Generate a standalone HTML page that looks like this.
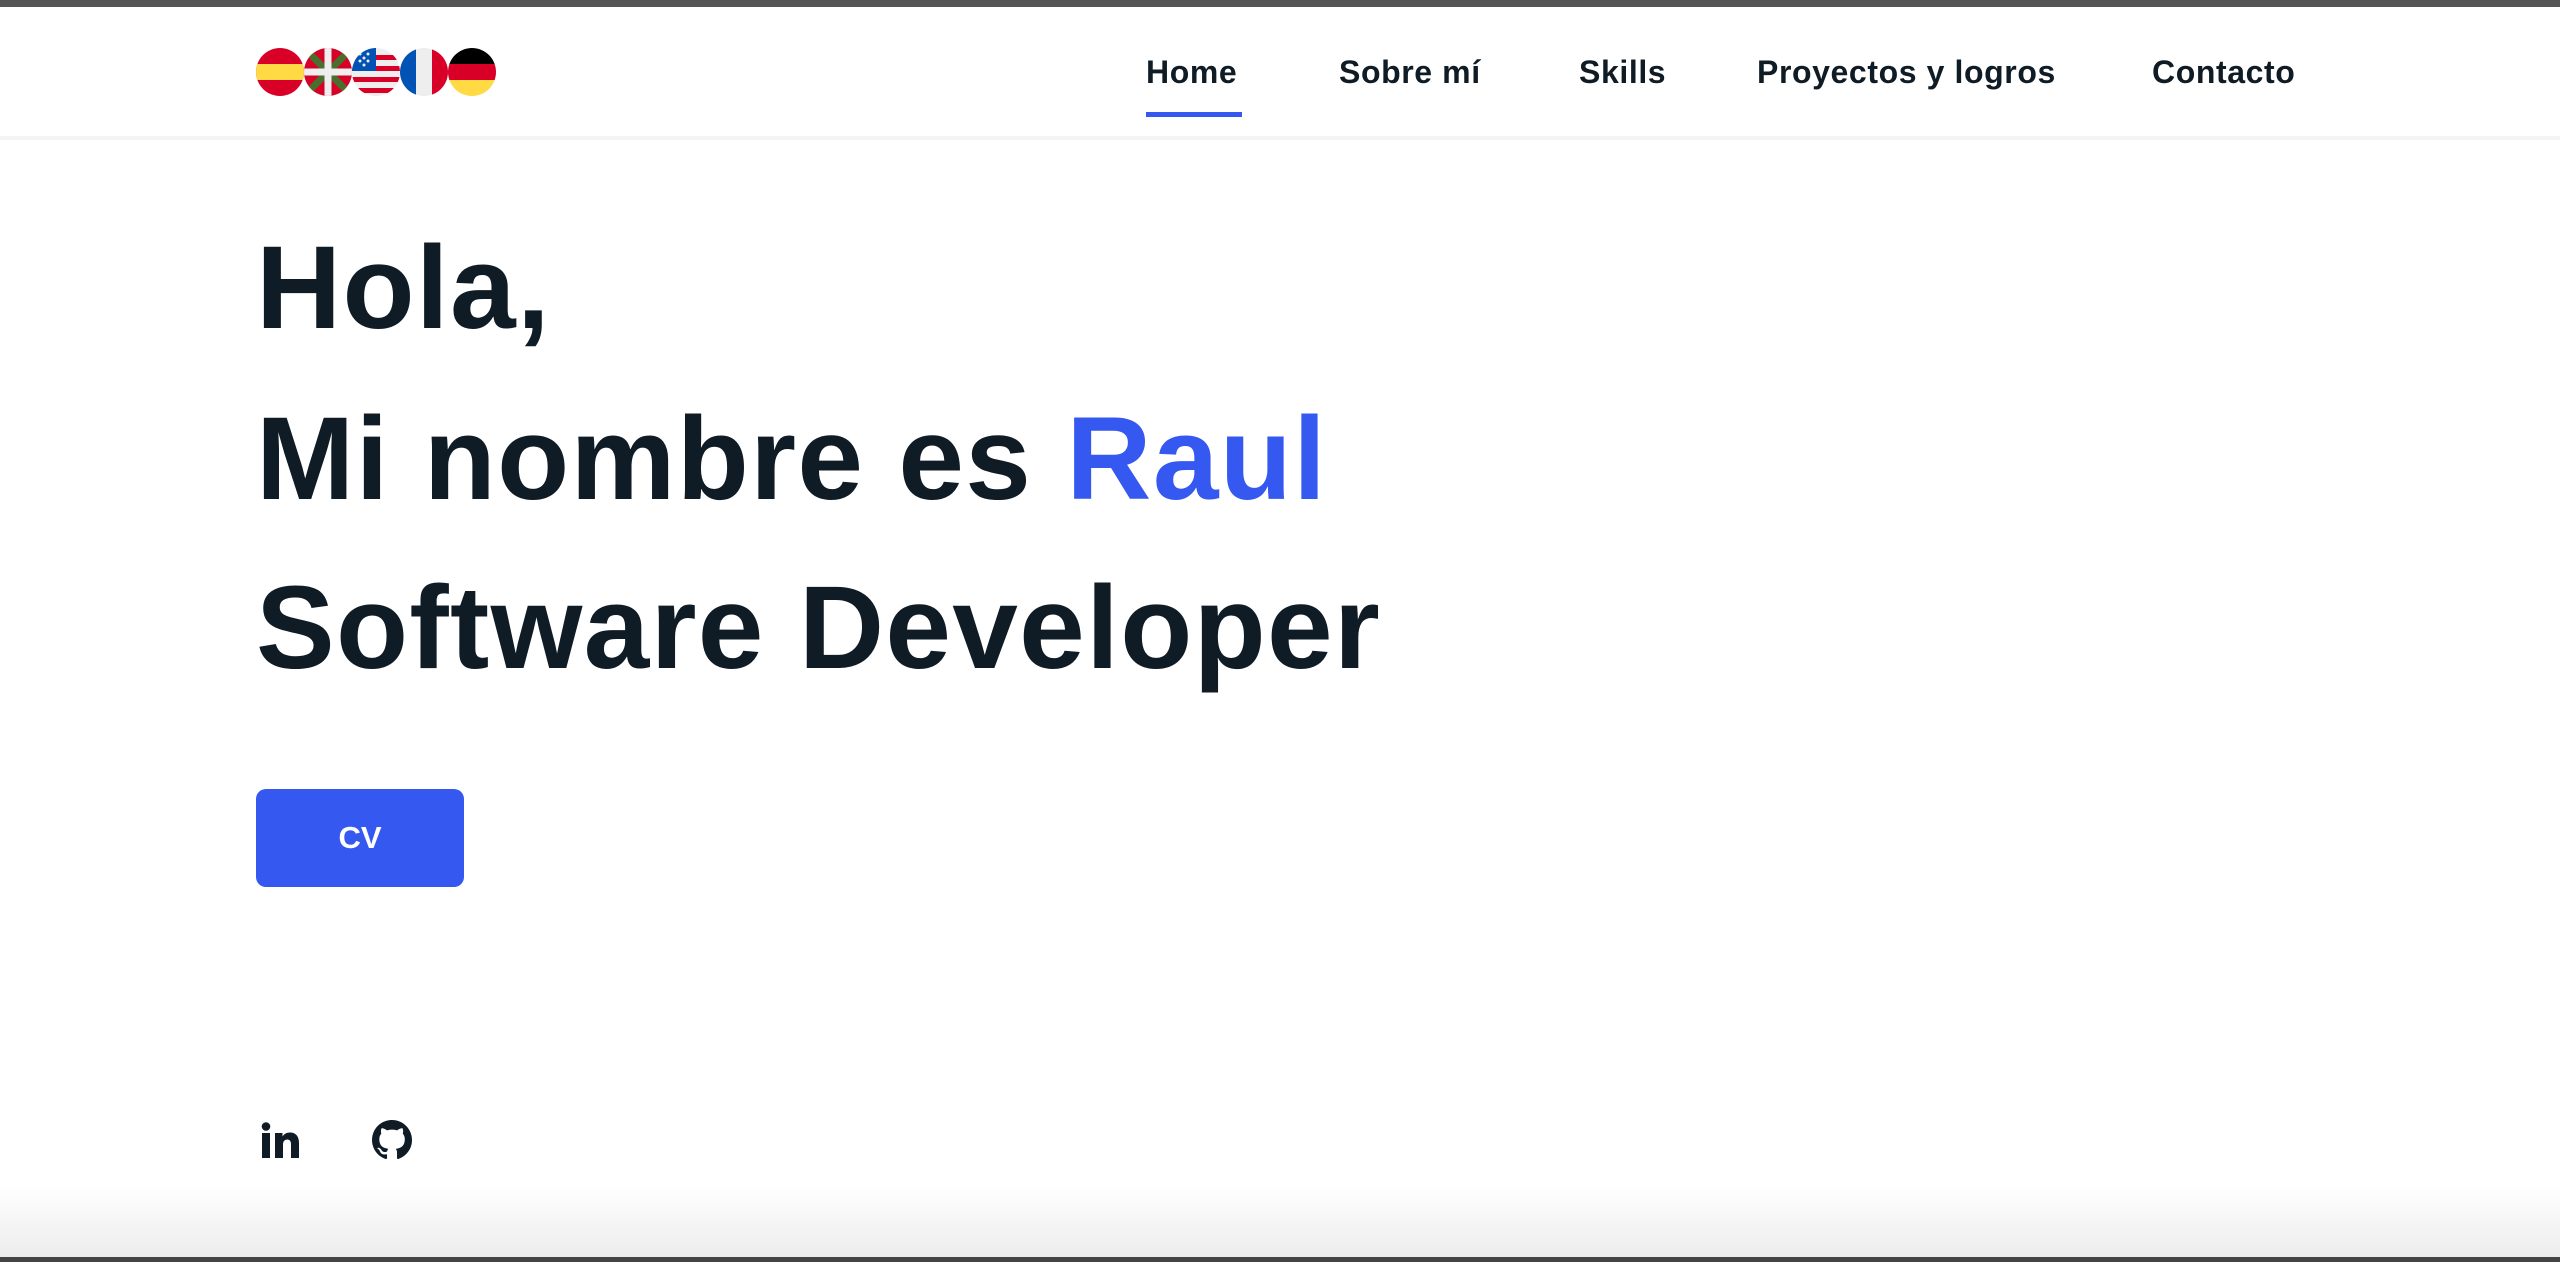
<!DOCTYPE html>
<html><head><meta charset="utf-8"><style>
html,body{margin:0;padding:0;}
body{width:2560px;height:1262px;position:relative;overflow:hidden;background:#fff;font-family:"Liberation Sans",sans-serif;color:#0f1b25;}
.top{position:absolute;left:0;top:0;width:2560px;height:7px;background:#555;}
.hdr{position:absolute;left:0;top:7px;width:2560px;height:129px;background:#fff;border-bottom:4px solid #f4f4f4;}
.flags{position:absolute;left:256px;top:48px;}
.flags svg{position:absolute;top:0;}
.nav a{position:absolute;top:52px;font-size:32px;font-weight:bold;color:#0f1b25;text-decoration:none;letter-spacing:0.6px;line-height:40px;white-space:nowrap;}
.ul{position:absolute;left:1146px;top:112px;width:96px;height:5px;background:#3558f0;}
h1{position:absolute;left:256px;margin:0;font-size:118px;font-weight:bold;line-height:118px;white-space:nowrap;letter-spacing:1.3px;}
.btn{position:absolute;left:256px;top:789px;width:208px;height:98px;background:#3558f0;border-radius:10px;color:#fff;font-weight:bold;font-size:31px;text-align:center;line-height:98px;}
.bot{position:absolute;left:0;top:1185px;width:2560px;height:73px;background:linear-gradient(#fff,#ececec);}
.botl{position:absolute;left:0;top:1257px;width:2560px;height:5px;background:#444;}
</style></head><body>
<div class="top"></div>
<div class="hdr">
</div>
<div class="flags">
<svg style="left:0" width="48" height="48" viewBox="0 0 48 48"><defs><clipPath id="c1"><circle cx="24" cy="24" r="24"/></clipPath></defs><g clip-path="url(#c1)"><rect width="48" height="48" fill="#d80027"/><rect y="16" width="48" height="16" fill="#ffda44"/></g></svg>
<svg style="left:48px" width="48" height="48" viewBox="0 0 48 48"><defs><clipPath id="c2"><circle cx="24" cy="24" r="24"/></clipPath></defs><g clip-path="url(#c2)"><rect width="48" height="48" fill="#d80027"/><path d="M0 0L48 48M48 0L0 48" stroke="#496e2d" stroke-width="7"/><path d="M24 0V48M0 24H48" stroke="#eee" stroke-width="7"/></g></svg>
<svg style="left:96px" width="48" height="48" viewBox="0 0 48 48"><defs><clipPath id="c3"><circle cx="24" cy="24" r="24"/></clipPath></defs><g clip-path="url(#c3)"><rect width="48" height="48" fill="#eee"/><rect y="7" width="48" height="5" fill="#d80027"/><rect y="18" width="48" height="5" fill="#d80027"/><rect y="29" width="48" height="5" fill="#d80027"/><rect y="40" width="48" height="5" fill="#d80027"/><rect width="24" height="23" fill="#0052b4"/><g fill="#eee"><circle cx="8" cy="6" r="1.5"/><circle cx="16" cy="6" r="1.5"/><circle cx="8" cy="13" r="1.5"/><circle cx="16" cy="13" r="1.5"/><circle cx="12" cy="10" r="1.5"/><circle cx="12" cy="17" r="1.5"/></g></g></svg>
<svg style="left:144px" width="48" height="48" viewBox="0 0 48 48"><defs><clipPath id="c4"><circle cx="24" cy="24" r="24"/></clipPath></defs><g clip-path="url(#c4)"><rect width="16" height="48" fill="#0052b4"/><rect x="16" width="16" height="48" fill="#eee"/><rect x="32" width="16" height="48" fill="#d80027"/></g></svg>
<svg style="left:192px" width="48" height="48" viewBox="0 0 48 48"><defs><clipPath id="c5"><circle cx="24" cy="24" r="24"/></clipPath></defs><g clip-path="url(#c5)"><rect width="48" height="16" fill="#000"/><rect y="16" width="48" height="16" fill="#d80027"/><rect y="32" width="48" height="16" fill="#ffda44"/></g></svg>
</div>
<div class="nav">
<a style="left:1146px">Home</a>
<a style="left:1339px">Sobre mí</a>
<a style="left:1579px">Skills</a>
<a style="left:1757px">Proyectos y logros</a>
<a style="left:2152px">Contacto</a>
</div>
<div class="ul"></div>
<h1 style="top:229px">Hola,</h1>
<h1 style="top:400px">Mi nombre es <span style="color:#3558f0">Raul</span></h1>
<h1 style="top:569px">Software Developer</h1>
<div class="btn">CV</div>
<svg style="position:absolute;left:261px;top:1122px" width="38" height="36" viewBox="0 0 38 36"><circle cx="5" cy="4.5" r="4.3" fill="#0f1b25"/><rect x="1" y="11" width="8" height="25" fill="#0f1b25"/><path d="M14 11H21.5V14.5C23 12 25.5 10.5 29 10.5C34.5 10.5 38 14 38 21V36H30V22.5C30 19.5 29 17.5 26.3 17.5C23.5 17.5 22 19.5 22 22.5V36H14Z" fill="#0f1b25"/></svg>
<svg style="position:absolute;left:372px;top:1120px" width="40" height="40" viewBox="0 0 16 16"><path fill="#0f1b25" d="M8 0C3.58 0 0 3.58 0 8c0 3.54 2.29 6.53 5.47 7.59.4.07.55-.17.55-.38 0-.19-.01-.82-.01-1.49-2.01.37-2.53-.49-2.69-.94-.09-.23-.48-.94-.82-1.13-.28-.15-.68-.52-.01-.53.63-.01 1.08.58 1.23.82.72 1.21 1.87.87 2.33.66.07-.52.28-.87.51-1.07-1.78-.2-3.64-.89-3.64-3.95 0-.87.31-1.59.82-2.15-.08-.2-.36-1.02.08-2.12 0 0 .67-.21 2.2.82.64-.18 1.32-.27 2-.27.68 0 1.36.09 2 .27 1.53-1.04 2.2-.82 2.2-.82.44 1.1.16 1.92.08 2.12.51.56.82 1.27.82 2.15 0 3.07-1.87 3.75-3.65 3.95.29.25.54.73.54 1.48 0 1.07-.01 1.93-.01 2.2 0 .21.15.46.55.38A8.013 8.013 0 0016 8c0-4.42-3.58-8-8-8z"/></svg>
<div class="bot"></div>
<div class="botl"></div>
</body></html>
